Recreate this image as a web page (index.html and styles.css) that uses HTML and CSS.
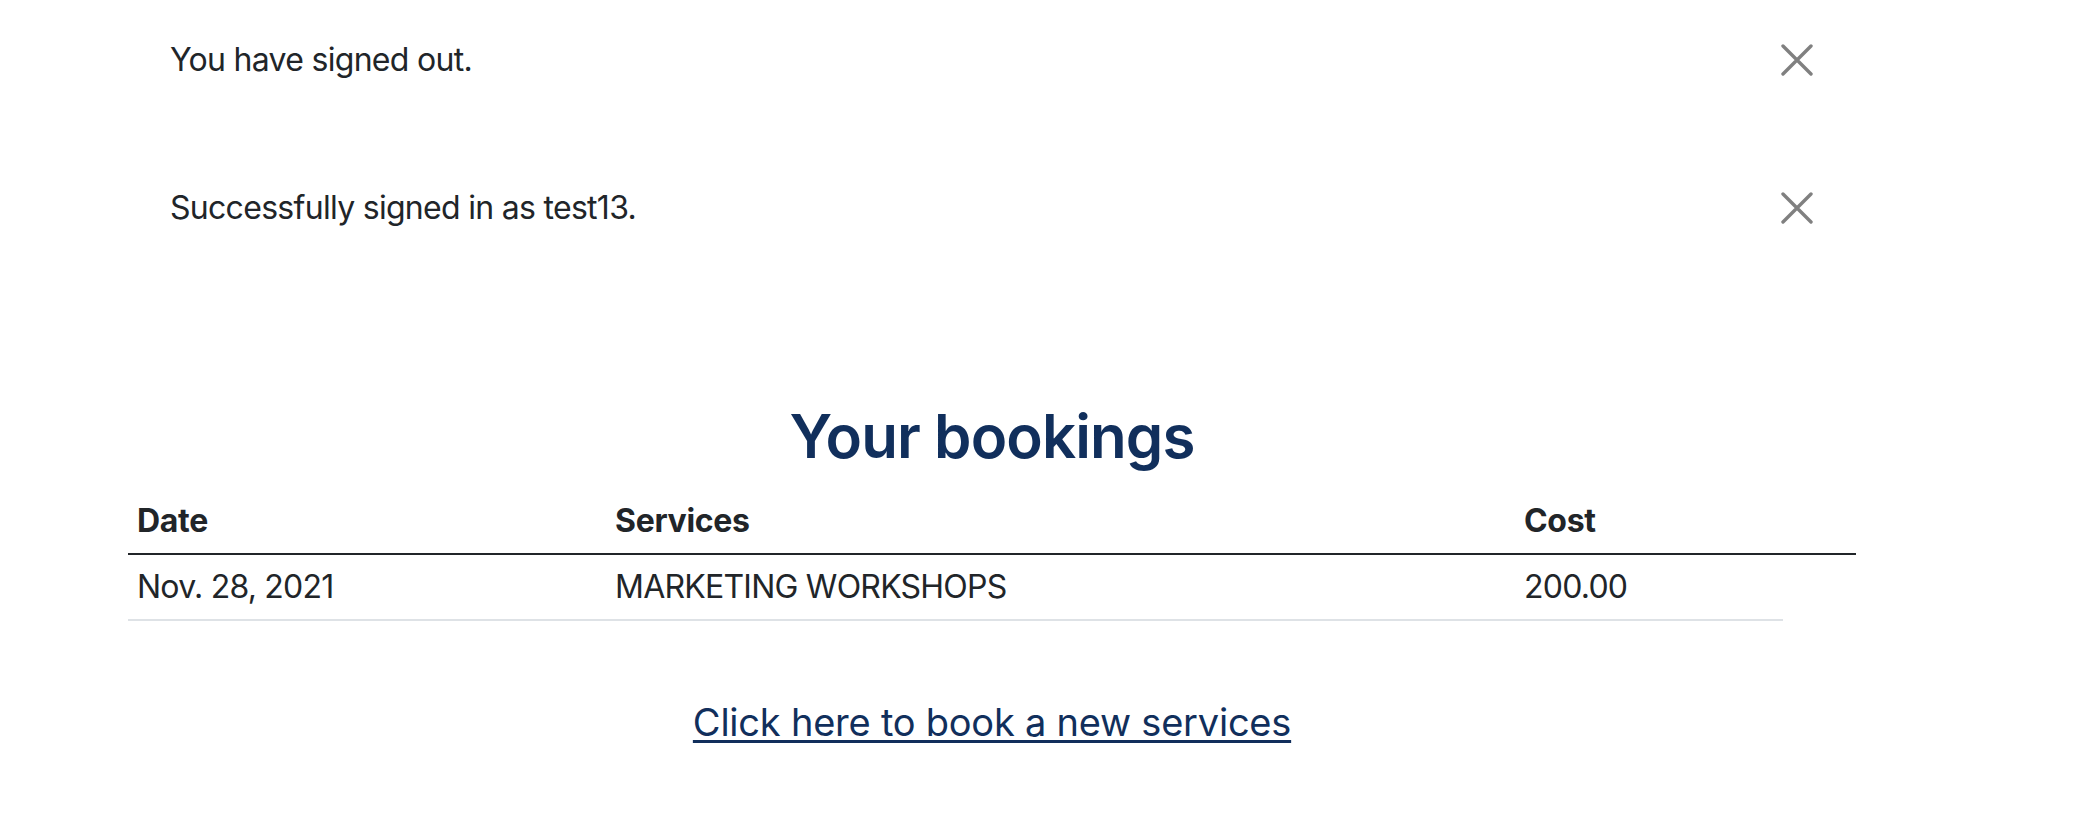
FILE: index.html
```html
<!DOCTYPE html>
<html lang="en">
<head>
<meta charset="utf-8">
<title>Your bookings</title>
<link rel="stylesheet" href="styles.css">
</head>
<body>
<main class="page">
  <div class="alerts">
    <div class="alert">
      <span class="alert-text">You have signed out.</span>
      <button class="btn-close" type="button" aria-label="Close">
        <svg viewBox="0 0 32 32" width="32" height="32"><path d="M2 2 L30 30 M30 2 L2 30" stroke="#808080" stroke-width="3.4" stroke-linecap="round" fill="none"/></svg>
      </button>
    </div>
    <div class="alert">
      <span class="alert-text">Successfully signed in as test13.</span>
      <button class="btn-close" type="button" aria-label="Close">
        <svg viewBox="0 0 32 32" width="32" height="32"><path d="M2 2 L30 30 M30 2 L2 30" stroke="#808080" stroke-width="3.4" stroke-linecap="round" fill="none"/></svg>
      </button>
    </div>
  </div>
  <section class="bookings">
    <h2 class="title">Your bookings</h2>
    <table class="table">
      <thead>
        <tr>
          <th class="col-date">Date</th>
          <th class="col-services">Services</th>
          <th class="col-cost">Cost</th>
          <th class="col-extra"></th>
        </tr>
      </thead>
      <tbody>
        <tr>
          <td>Nov. 28, 2021</td>
          <td>MARKETING WORKSHOPS</td>
          <td>200.00</td>
        </tr>
      </tbody>
    </table>
    <p class="cta"><a class="cta-link" href="#">Click here to book a new services</a></p>
  </section>
</main>
</body>
</html>
```
FILE: styles.css
```css
html, body {
  margin: 0;
  padding: 0;
  background: #ffffff;
}
body {
  font-family: Inter, "Noto Sans", "Liberation Sans", sans-serif;
  color: #212529;
}
.page {
  padding: 2px 230px 0 128px;
}
.alerts {
  display: flex;
  flex-direction: column;
  gap: 32px;
  margin: 0 8px;
}
.alert {
  display: flex;
  align-items: center;
  justify-content: space-between;
  border: 2px solid transparent;
  padding: 32px 33px 32px 32px;
  font-size: 32px;
  line-height: 48px;
  letter-spacing: -0.022em;
}
.btn-close {
  display: flex;
  border: 0;
  padding: 0;
  background: transparent;
  width: 32px;
  height: 32px;
}
.bookings {
  padding-top: 134px;
}
.title {
  margin: 0 0 17px;
  text-align: center;
  font-size: 60px;
  line-height: 72px;
  font-weight: 600;
  color: #112f5c;
  letter-spacing: -0.015em;
}
.table {
  border-collapse: collapse;
  width: 1728px;
  table-layout: fixed;
}
.table th,
.table td {
  box-sizing: border-box;
}
.col-date { width: 478px; }
.col-services { width: 909px; }
.col-cost { width: 268px; }
.col-extra { width: 73px; }
.table th {
  text-align: left;
  font-size: 32px;
  line-height: 48px;
  font-weight: 700;
  padding: 8px 9px;
  border-bottom: 2px solid #212529;
  letter-spacing: -0.01em;
}
.table td {
  font-size: 32px;
  line-height: 48px;
  padding: 8px 9px;
  border-bottom: 2px solid #dee2e6;
  letter-spacing: -0.024em;
}
.cta {
  margin: 73px 0 0;
  text-align: center;
  font-size: 38px;
  line-height: 57px;
  letter-spacing: -0.006em;
}
.cta-link {
  color: #112f5c;
  text-decoration: underline;
  text-decoration-thickness: 3px;
  text-underline-offset: 4px;
}
```
